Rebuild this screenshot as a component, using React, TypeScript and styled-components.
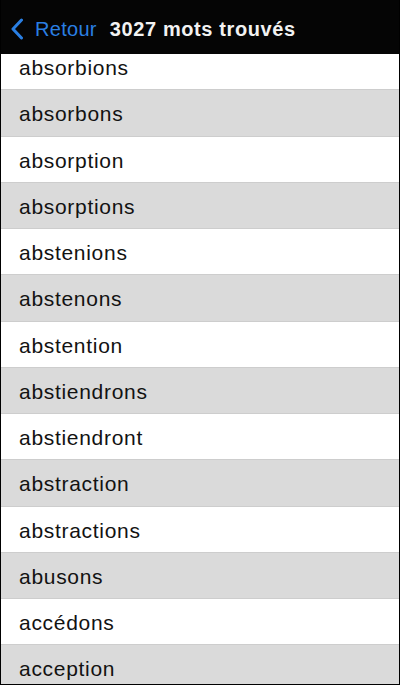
import React, { useLayoutEffect, useRef } from "react";
import styled, { createGlobalStyle } from "styled-components";

const GlobalStyle = createGlobalStyle`
  html, body {
    margin: 0;
    padding: 0;
    background: #000;
  }
  * { box-sizing: border-box; }
`;

const Screen = styled.div`
  width: 400px;
  height: 685px;
  display: flex;
  flex-direction: column;
  background: #000;
  border-left: 1px solid #000;
  border-right: 1px solid #000;
  border-bottom: 1px solid #000;
  font-family: "Liberation Sans", Arial, sans-serif;
  overflow: hidden;
`;

const NavBar = styled.header`
  height: 54px;
  flex: none;
  display: flex;
  align-items: center;
  padding: 4px 0 0 9px;
  background: #050505;
`;

const BackButton = styled.button`
  display: flex;
  align-items: center;
  gap: 11px;
  background: none;
  border: none;
  padding: 0;
  margin: 0;
  font-family: inherit;
  font-size: 20px;
  letter-spacing: 0.3px;
  color: #2a7fe3;
  cursor: pointer;
`;

const Title = styled.h1`
  margin: 0 0 0 13px;
  font-size: 20px;
  font-weight: 700;
  letter-spacing: 0.6px;
  color: #f2f2f2;
`;

const ListViewport = styled.div`
  flex: 1;
  overflow: hidden;
  background: #fff;
`;

const List = styled.ul`
  list-style: none;
  margin: 0;
  padding: 0;
`;

const Row = styled.li<{ $shaded: boolean }>`
  height: 46.25px;
  display: flex;
  align-items: center;
  padding: 3px 0 0 18px;
  background: ${(p) => (p.$shaded ? "#dadada" : "#ffffff")};
  border-bottom: 1px solid #cdcdcd;
  font-size: 21px;
  letter-spacing: 0.7px;
  color: #121212;
`;

const words = [
  "absorbions",
  "absorbons",
  "absorption",
  "absorptions",
  "abstenions",
  "abstenons",
  "abstention",
  "abstiendrons",
  "abstiendront",
  "abstraction",
  "abstractions",
  "abusons",
  "accédons",
  "acception",
];

const Chevron = () => (
  <svg width="14" height="22" viewBox="0 0 14 22" aria-hidden="true">
    <path
      d="M11.5 2 L3 11 L11.5 20"
      fill="none"
      stroke="#2a7fe3"
      strokeWidth="3"
      strokeLinecap="round"
      strokeLinejoin="round"
    />
  </svg>
);

export default function App() {
  const viewport = useRef<HTMLDivElement>(null);
  useLayoutEffect(() => {
    if (viewport.current) viewport.current.scrollTop = 10;
  }, []);
  return (
    <>
      <GlobalStyle />
      <Screen>
        <NavBar>
          <BackButton>
            <Chevron />
            Retour
          </BackButton>
          <Title>3027 mots trouvés</Title>
        </NavBar>
        <ListViewport ref={viewport}>
          <List>
            {words.map((w, i) => (
              <Row key={w} $shaded={i % 2 === 1}>
                {w}
              </Row>
            ))}
          </List>
        </ListViewport>
      </Screen>
    </>
  );
}
